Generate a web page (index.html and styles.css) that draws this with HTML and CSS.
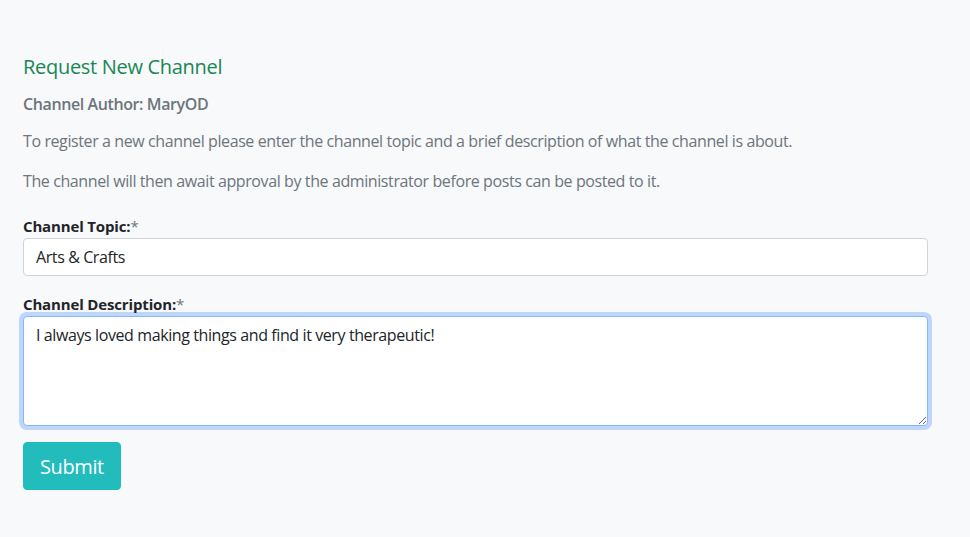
FILE: index.html
```html
<!DOCTYPE html>
<html>
<head>
<meta charset="utf-8">
<link rel="stylesheet" href="styles.css">
</head>
<body>
<main class="page">
  <h5 class="title">Request New Channel</h5>
  <h6 class="author">Channel Author: MaryOD</h6>
  <p class="muted">To register a new channel please enter the channel topic and a brief description of what the channel is about.</p>
  <p class="muted">The channel will then await approval by the administrator before posts can be posted to it.</p>
  <form class="form">
    <div class="group">
      <label class="label">Channel Topic:<span class="req">*</span></label>
      <input class="control" type="text" value="Arts &amp; Crafts">
    </div>
    <div class="group">
      <label class="label">Channel Description:<span class="req">*</span></label>
      <textarea class="control area focus" rows="4">I always loved making things and find it very therapeutic!</textarea>
    </div>
    <button class="btn" type="button">Submit</button>
  </form>
</main>
</body>
</html>
```
FILE: styles.css
```css
* { box-sizing: border-box; }
html, body { margin: 0; padding: 0; }
body {
  background: #f8f9fa;
  font-family: "Open Sans", "Noto Sans", sans-serif;
  font-size: 16px;
  line-height: 24px;
  color: #212529;
  width: 970px;
  height: 537px;
  overflow: hidden;
}
.page {
  padding: 55px 42px 0 23px;
}
.title {
  margin: 0 0 13px;
  font-size: 20px;
  line-height: 24px;
  font-weight: 500;
  color: #198754;
  letter-spacing: -0.3px;
}
.author {
  margin: 0 0 13px;
  font-size: 16px;
  line-height: 24px;
  font-weight: 600;
  color: #6c757d;
  letter-spacing: -0.4px;
}
.muted {
  margin: 0 0 16px;
  color: #6c757d;
  font-size: 16px;
  letter-spacing: -0.4px;
}
.form { margin-top: 21px; }
.group { margin-bottom: 16px; }
.label {
  display: block;
  font-weight: 700;
  font-size: 15px;
  letter-spacing: -0.15px;
}
.req { font-weight: 400; color: #6c757d; }
.control {
  display: block;
  width: 100%;
  height: 38px;
  padding: 6px 12px;
  font-family: inherit;
  font-size: 16px;
  letter-spacing: -0.4px;
  line-height: 24px;
  color: #212529;
  background: #fff;
  border: 1px solid #ced4da;
  border-radius: 4px;
  outline: none;
}
.area {
  height: 110px;
  resize: vertical;
}
.focus {
  border-color: #86b7fe;
  box-shadow: 0 0 0 4px rgba(13,110,253,.25);
}
.btn {
  display: inline-block;
  height: 48px;
  padding: 0 16px;
  font-family: inherit;
  font-size: 20px;
  letter-spacing: -0.4px;
  color: #fff;
  background: #22bcbc;
  border: 1px solid #22bcbc;
  border-radius: 4px;
}
```
